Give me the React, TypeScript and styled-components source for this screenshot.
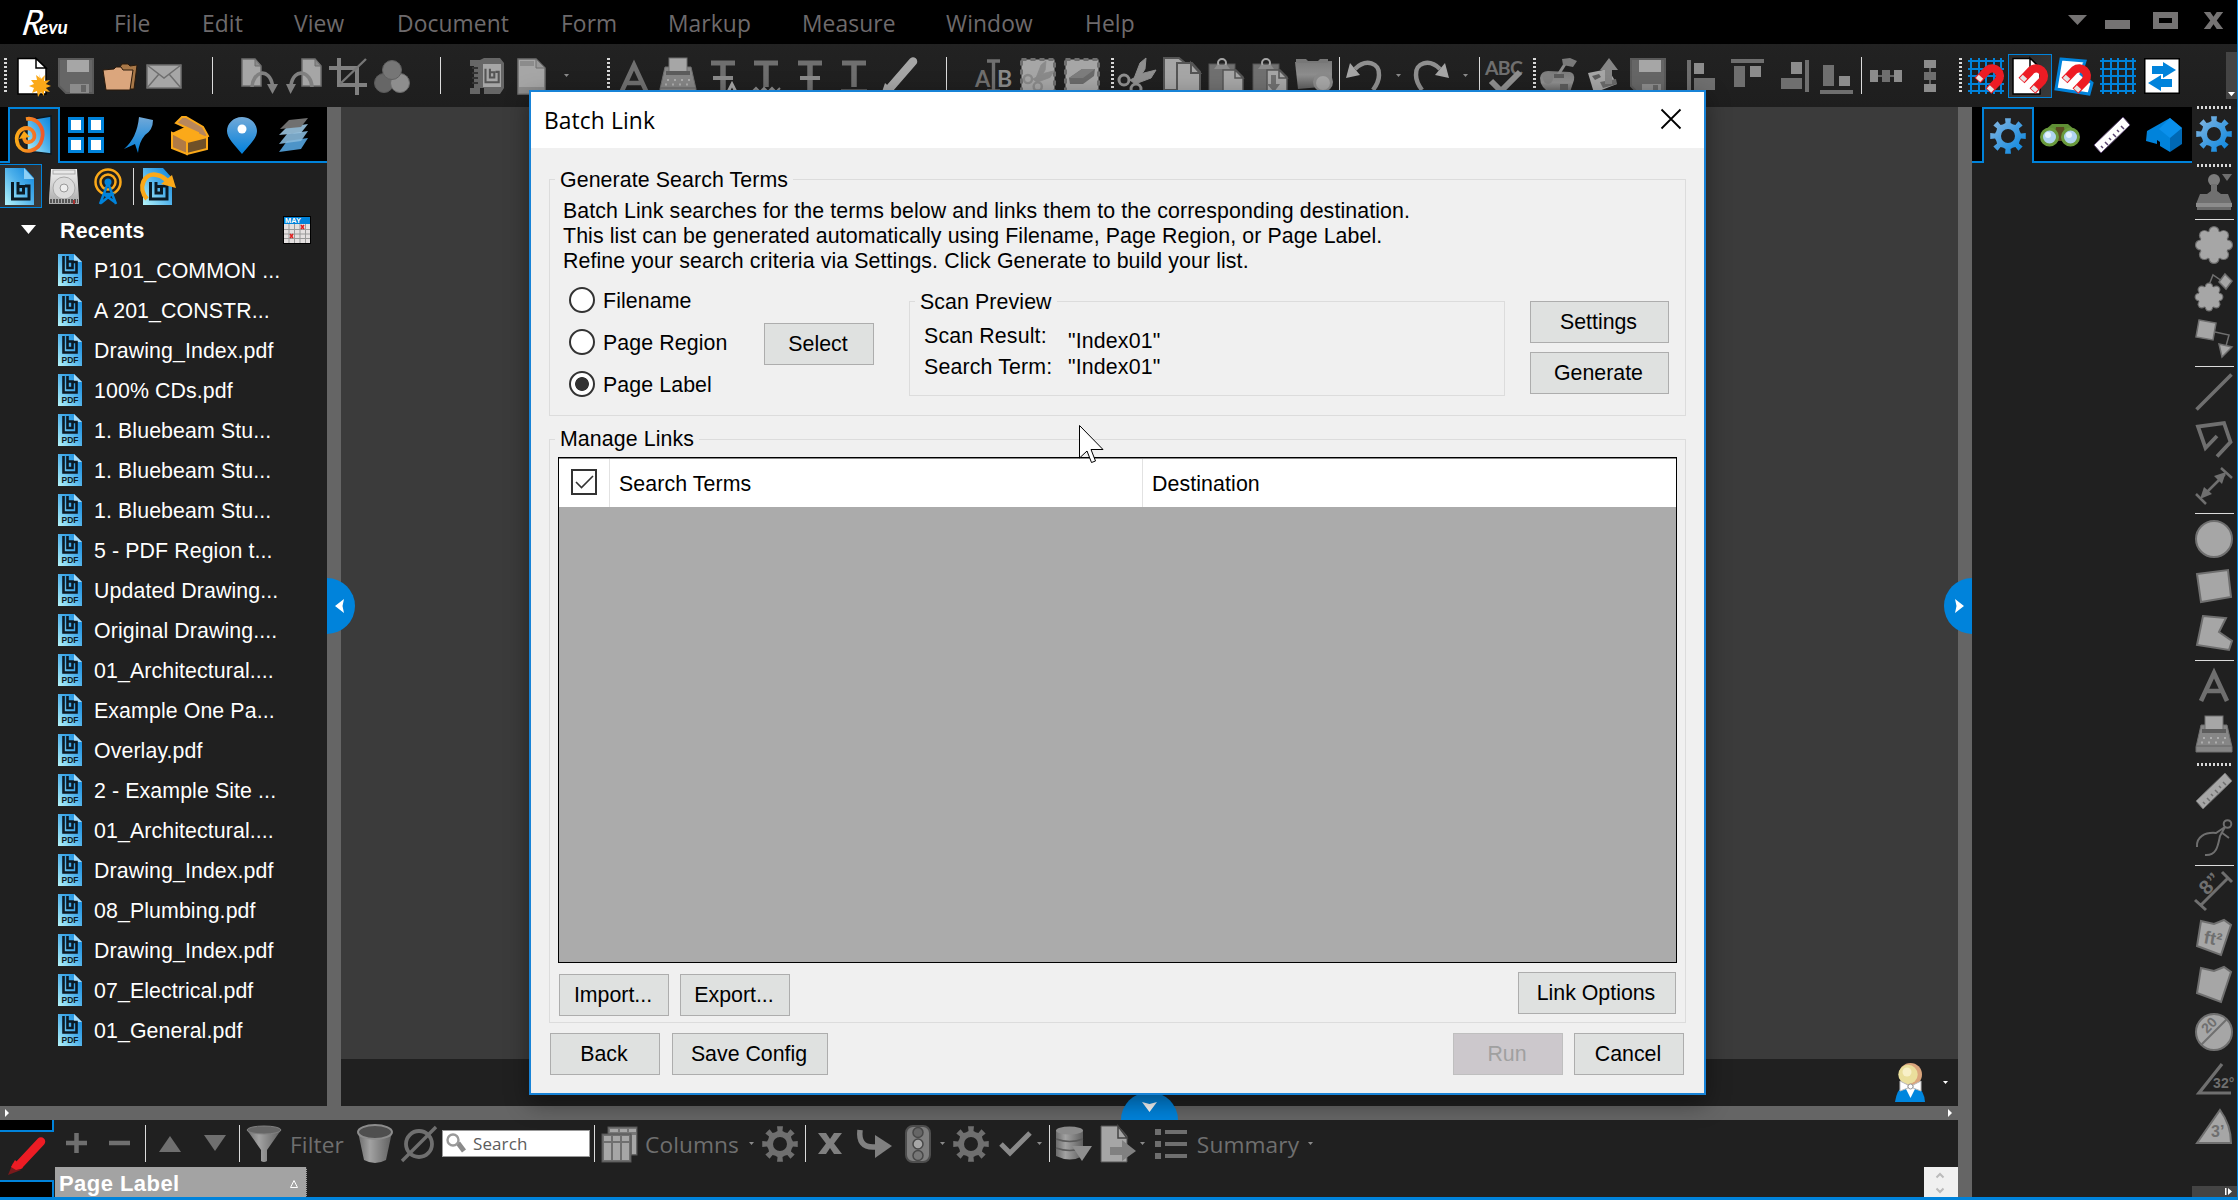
import React from 'react';
import styled, { createGlobalStyle } from 'styled-components';

const BLUE = '#0083db';
const PANEL = '#202020';
const SPLIT = '#656565';
const MID = '#6f6f6f';
const LIGHT = '#a6a6a6';
const SANS = '"Liberation Sans", Arial, sans-serif';
const UI = '"Open Sans", "Noto Sans", sans-serif';

const Global = createGlobalStyle`
  * { box-sizing: border-box; }
  html, body { margin: 0; background: #000; overflow: hidden; }
  svg { display: block; overflow: visible; }
`;

/* ------------------------------------------------------------------ */
/* Frame                                                               */
/* ------------------------------------------------------------------ */

const Frame = styled.div`
  position: relative;
  width: 2238px;
  height: 1200px;
  display: grid;
  grid-template-rows: 44px 63px 1fr;
  border-right: 1px solid ${BLUE};
  border-bottom: 3px solid ${BLUE};
  background: ${PANEL};
  font-family: ${SANS};
  font-size: 21.33px;
  letter-spacing: 0.1px;
  overflow: hidden;
`;

const TitleBar = styled.header`
  display: flex;
  background: #000;
  padding-left: 21px;
`;

const Logo = styled.div`
  width: 93px;
  padding-top: 6px;
`;

const MenuItem = styled.div<{ $w: number }>`
  width: ${(p) => p.$w}px;
  font: 22.8px/31px ${UI};
  padding-top: 8px;
  color: #6e6a6c;
  white-space: nowrap;
`;

const WindowControls = styled.div`
  display: flex;
  align-items: flex-start;
  margin-left: auto;
  padding: 12px 13px 0 0;
`;

const Bar = styled.div<{ $h: number }>`
  display: flex;
  align-items: center;
  height: ${(p) => p.$h}px;
`;

const TopBar = styled(Bar)`
  background: linear-gradient(#222, #1e1e1e);
`;

const Slot = styled.div<{ $lead: number; $w: number; $drop?: number }>`
  flex: none;
  display: flex;
  justify-content: center;
  margin-left: ${(p) => p.$lead}px;
  margin-top: ${(p) => p.$drop ?? 0}px;
  width: ${(p) => p.$w}px;
`;

const Rule = styled.i<{ $h?: number }>`
  width: 1px;
  height: ${(p) => p.$h ?? 37}px;
  background: #dcdcdc;
`;

const Grip = styled.i`
  width: 3px;
  height: 36px;
  background: repeating-linear-gradient(#d8d8d8 0 2px, transparent 2px 4px);
`;

const Pressed = styled.div`
  display: flex;
  align-items: center;
  justify-content: center;
  width: 44px;
  height: 44px;
  flex: none;
  border: 1px solid ${BLUE};
  background: linear-gradient(135deg, #2a2a2a, #3a3a3a);
`;

const Overflow = styled.div`
  width: 11px;
  height: 47px;
  background: #444;
  display: flex;
  align-items: flex-end;
  justify-content: center;
  padding-bottom: 3px;
`;

const Body = styled.div`
  display: flex;
  min-height: 0;
`;

const Work = styled.div`
  width: 1958px;
  display: flex;
  flex-direction: column;
`;

const Upper = styled.div`
  display: flex;
  height: 999px;
`;

const VSplit = styled.div`
  position: relative;
  width: 14px;
  flex: none;
  background: ${SPLIT};
`;

const HSplit = styled.div`
  position: relative;
  display: flex;
  align-items: center;
  justify-content: space-between;
  height: 14px;
  padding: 0 6px 0 5px;
  flex: none;
  background: ${SPLIT};
`;

const Handle = styled.div<{ $side: 'left' | 'right' | 'bottom' }>`
  position: absolute;
  display: flex;
  align-items: center;
  justify-content: center;
  background: ${BLUE};
  ${(p) => p.$side === 'left' && 'left: 0; top: 471px; width: 28px; height: 56px; border-radius: 0 28px 28px 0; padding-right: 3px;'}
  ${(p) => p.$side === 'right' && 'right: 0; top: 471px; width: 28px; height: 56px; border-radius: 28px 0 0 28px; padding-left: 3px;'}
  ${(p) => p.$side === 'bottom' && 'left: 1121px; bottom: 0; width: 57px; height: 28px; border-radius: 28px 28px 0 0; padding-top: 1px;'}
`;

const Canvas = styled.main`
  flex: 1;
  background: #3b3b3b;
  display: flex;
  flex-direction: column;
  justify-content: flex-end;
`;

const StatusStrip = styled.div`
  height: 47px;
  background: ${PANEL};
  display: flex;
  justify-content: flex-end;
  align-items: center;
  padding-right: 10px;
  gap: 17px;
`;

/* ------------------------------------------------------------------ */
/* Side panels                                                         */
/* ------------------------------------------------------------------ */

const LeftPanel = styled.aside`
  width: 327px;
  flex: none;
  background: ${PANEL};
`;

const Tabs = styled.div`
  display: flex;
  height: 56px;
  background: #000;
`;

const TabGap = styled.div<{ $w?: number }>`
  ${(p) => (p.$w ? `width: ${p.$w}px;` : 'flex: 1;')}
  border-bottom: 2px solid ${BLUE};
`;

const Tab = styled.div<{ $active?: boolean; $w: number }>`
  display: flex;
  align-items: center;
  justify-content: center;
  width: ${(p) => p.$w}px;
  ${(p) =>
    p.$active
      ? `background: ${PANEL}; border: 2px solid ${BLUE}; border-bottom: 0;`
      : `border-bottom: 2px solid ${BLUE}; padding-top: 2px;`}
`;

const SourceBar = styled.div`
  display: flex;
  align-items: center;
  height: 46px;
`;

const SourcePressed = styled(Pressed)`
  width: 42px;
  border-left: 0;
  padding-right: 2px;
`;

const SectionHead = styled.div`
  display: flex;
  align-items: center;
  height: 41px;
  padding: 0 16px 0 21px;
  color: #fff;
  font-weight: bold;
  letter-spacing: 0.25px;

  & > span {
    flex: 1;
    margin-left: 24px;
    padding-top: 4px;
  }
`;

const FileRow = styled.div`
  display: flex;
  align-items: center;
  height: 40px;
  padding-left: 58px;
  gap: 12px;
  color: #fff;
  white-space: pre;

  span {
    padding-top: 3px;
  }
`;

const RightPanel = styled.aside`
  width: 220px;
  flex: none;
  background: ${PANEL};
`;

const ToolColumn = styled.div`
  display: flex;
  flex-direction: column;
  flex: 1;
`;

const ToolSlot = styled.div<{ $lead: number; $h: number }>`
  flex: none;
  display: flex;
  align-items: center;
  width: 44px;
  justify-content: center;
  margin-top: ${(p) => p.$lead}px;
  height: ${(p) => p.$h}px;
`;

const HRule = styled.i`
  width: 39px;
  height: 1px;
  background: #dcdcdc;
`;

const HGrip = styled.i`
  width: 36px;
  height: 3px;
  margin-left: 2px;
  background: repeating-linear-gradient(90deg, #d8d8d8 0 2px, transparent 2px 4px);
`;

const ColumnEnd = styled.div`
  width: 45px;
  height: 11px;
  margin-top: auto;
  background: #444;
  display: flex;
  align-items: center;
  justify-content: flex-end;
  padding-right: 5px;
`;

/* ------------------------------------------------------------------ */
/* Markups list panel                                                  */
/* ------------------------------------------------------------------ */

const Bottom = styled.section`
  display: flex;
  height: 77px;
`;

const SideTabs = styled.div`
  width: 54px;
  display: grid;
  grid-template-rows: 12px 48px 17px;
`;

const SideTab = styled.div<{ $edge?: 'top' | 'bottom' }>`
  display: flex;
  align-items: center;
  justify-content: center;
  ${(p) => p.$edge && `background: #000; border-right: 2px solid ${BLUE}; border-${p.$edge}: 2px solid ${BLUE};`}
`;

const BottomMain = styled.div`
  flex: 1;
  display: flex;
  flex-direction: column;
`;

const BarText = styled.span`
  font: 22.7px/30px ${UI};
  color: ${MID};
  white-space: nowrap;
  padding-top: 3px;
`;

const SearchBox = styled.div`
  display: flex;
  align-items: center;
  gap: 6px;
  width: 148px;
  height: 27px;
  padding-left: 3px;
  border: 1px solid #999;
  background: #fff;
  color: #5c5c5c;
  font: 17px/24px ${UI};
`;

const HeaderLine = styled.div`
  display: flex;
  justify-content: space-between;
  height: 30px;
  padding-left: 1px;
`;

const ColumnHead = styled.div`
  display: flex;
  align-items: center;
  justify-content: space-between;
  width: 252px;
  padding: 4px 8px 0 4px;
  background: #a3a3a3;
  border-right: 1px dotted #333;
  color: #fff;
  font-size: 22px;
  font-weight: bold;
  letter-spacing: 0.45px;
`;

const Spinner = styled.div`
  width: 34px;
  background: #f0f0f0;
  display: flex;
  flex-direction: column;
  align-items: center;
  justify-content: space-between;
  padding: 6px 2px 4px 0;
`;

/* ------------------------------------------------------------------ */
/* Dialog                                                              */
/* ------------------------------------------------------------------ */

const Dialog = styled.div`
  position: absolute;
  left: 529px;
  top: 90px;
  width: 1177px;
  height: 1005px;
  border: 2px solid #1883d7;
  background: #f0f0f0;
  box-shadow: 0 8px 22px rgba(0, 0, 0, 0.4);
  color: #000;
  line-height: 24px;
`;

const DialogTitle = styled.div`
  display: flex;
  justify-content: space-between;
  height: 56px;
  padding: 0 23px 0 13px;
  background: #fff;
  font: 22.8px/58px ${UI};

  svg {
    margin-top: 17px;
  }
`;

const DialogBody = styled.div`
  padding: 19px 18px 0;
`;

const Group = styled.fieldset<{ $h: number; $mt?: number }>`
  margin: ${(p) => p.$mt ?? 0}px 0 0;
  padding: 0;
  min-width: 0;
  height: ${(p) => p.$h}px;
  border: 1px solid #dcdcdc;
`;

const Legend = styled.legend<{ $line?: number }>`
  height: 24px;
  line-height: ${(p) => p.$line ?? 25}px;
  margin-left: 5px;
  padding: 0 5px;
`;

const Intro = styled.p`
  margin: 8px 0 0 13px;
  line-height: 25px;
  white-space: nowrap;
`;

const OptionsRow = styled.div`
  display: flex;
  align-items: flex-start;
  padding: 0 0 0 19px;
`;

const Radios = styled.div`
  width: 195px;
  padding-top: 5px;
`;

const RadioRow = styled.label`
  display: flex;
  align-items: center;
  gap: 8px;
  height: 42px;

  span {
    padding-top: 2px;
  }
`;

const RadioDot = styled.i<{ $on?: boolean }>`
  width: 26px;
  height: 26px;
  border-radius: 50%;
  border: 2px solid #333;
  background: ${(p) => (p.$on ? 'radial-gradient(circle, #333 0 6.5px, #fff 7.3px)' : '#fff')};
`;

const Btn = styled.button<{ $w: number; $off?: boolean }>`
  width: ${(p) => p.$w}px;
  height: 42px;
  padding: 0 2px 1px 0;
  border: 1px solid ${(p) => (p.$off ? '#bfbfbf' : '#adadad')};
  background: ${(p) => (p.$off ? '#ccc8cc' : '#dfe1e0')};
  color: ${(p) => (p.$off ? '#a0a0a0' : '#000')};
  font: inherit;
`;

const SelectWrap = styled.div`
  margin-top: 49px;
  width: 145px;
`;

const ScanGroup = styled(Group)`
  width: 596px;
  margin-top: 15px;
`;

const ScanGrid = styled.div`
  display: grid;
  grid-template-columns: 144px 1fr;
  row-gap: 7px;
  padding: 11px 0 0 14px;
  letter-spacing: 0.15px;

  & > b {
    font-weight: normal;
  }
`;

const FirstValue = styled.b`
  padding-top: 5px;
  height: 24px;
`;

const Stack = styled.div`
  display: flex;
  flex-direction: column;
  gap: 9px;
  padding: 27px 0 0 25px;
`;

const Table = styled.div`
  margin: 6px 8px 0;
  height: 506px;
  border: 1px solid #000;
  background: #ababab;
`;

const TableHead = styled.div`
  display: grid;
  grid-template-columns: 50px 533px 1fr;
  height: 49px;
  border-top: 1px solid #888;
  background: #fff;
`;

const HeadCell = styled.div`
  display: flex;
  align-items: center;
  padding: 2px 0 0 9px;
  border-left: 1px solid #e2e2e2;
`;

const CheckCell = styled.div`
  padding: 10px 0 0 12px;
`;

const ButtonRow = styled.div<{ $pad: string }>`
  display: flex;
  align-items: flex-start;
  padding: ${(p) => p.$pad};
`;

const Push = styled.div<{ $w?: number }>`
  ${(p) => (p.$w ? `width: ${p.$w}px;` : 'flex: 1;')}
`;

const Lower = styled.div`
  padding-top: 2px;
  display: flex;
`;

const Pointer = styled.div`
  position: absolute;
  left: 1079px;
  top: 425px;
`;

/* ------------------------------------------------------------------ */
/* Icons                                                               */
/* ------------------------------------------------------------------ */

type IconProps = { children: React.ReactNode; w?: number; h?: number; vb?: string };
const Ic = ({ children, w = 36, h = 36, vb }: IconProps) => (
  <svg width={w} height={h} viewBox={vb ?? `0 0 ${w} ${h}`} fill="none">
    {children}
  </svg>
);

const Defs = () => (
  <svg width="0" height="0" style={{ position: 'absolute' }}>
    <defs>
      <linearGradient id="blue" x1="0" y1="0" x2="1" y2="1">
        <stop offset="0" stopColor="#8ab8e0" />
        <stop offset="1" stopColor="#0083e0" />
      </linearGradient>
      <linearGradient id="blueDown" x1="0" y1="0" x2="0" y2="1">
        <stop offset="0" stopColor="#72a9d8" />
        <stop offset="1" stopColor="#0080dc" />
      </linearGradient>
      <linearGradient id="doc" x1="1" y1="0" x2="0" y2="1">
        <stop offset="0" stopColor="#0a84dc" />
        <stop offset="0.45" stopColor="#4aaeea" />
        <stop offset="1" stopColor="#b4f4fa" />
      </linearGradient>
      <linearGradient id="grey" x1="0" y1="0" x2="0" y2="1">
        <stop offset="0" stopColor="#7a7a7a" />
        <stop offset="0.5" stopColor="#8e8e8e" />
        <stop offset="1" stopColor="#5e5e5e" />
      </linearGradient>
      <linearGradient id="greySide" x1="0" y1="0" x2="1" y2="0">
        <stop offset="0" stopColor="#6b6b6b" />
        <stop offset="0.35" stopColor="#a2a2a2" />
        <stop offset="1" stopColor="#5f5f5f" />
      </linearGradient>
      <linearGradient id="disk" x1="0" y1="0" x2="0" y2="1">
        <stop offset="0" stopColor="#f4f4f4" />
        <stop offset="1" stopColor="#a9a9a9" />
      </linearGradient>
      <linearGradient id="swirl" x1="0" y1="0" x2="1" y2="0">
        <stop offset="0" stopColor="#fba919" />
        <stop offset="1" stopColor="#ef5a2a" />
      </linearGradient>
    </defs>
  </svg>
);

const gearPath = (() => {
  const pts: string[] = [];
  for (let i = 0; i < 8; i++) {
    const a = (i * Math.PI) / 4;
    [
      [-0.42, 12.6],
      [-0.19, 13.2],
      [-0.165, 18],
      [0.165, 18],
      [0.19, 13.2],
      [0.42, 12.6],
    ].forEach(([d, r]) => {
      pts.push(`${(18 + r * Math.sin(a + d)).toFixed(2)} ${(18 - r * Math.cos(a + d)).toFixed(2)}`);
    });
  }
  return `M${pts.join('L')}ZM18 11a7 7 0 1 0 0 14a7 7 0 1 0 0 -14Z`;
})();

const Gear = ({ fill = MID, size = 36 }: { fill?: string; size?: number }) => (
  <Ic w={size} h={size} vb="0 0 36 36">
    <path d={gearPath} fill={fill} fillRule="evenodd" />
  </Ic>
);

const Down = ({ w = 5, fill = '#8a8a8a' }: { w?: number; fill?: string }) => (
  <Ic w={w} h={w * 0.6} vb="0 0 10 6">
    <path d="M0 0H10L5 6Z" fill={fill} />
  </Ic>
);

const PageBody = ({ x = 0 }: { x?: number }) => (
  <g transform={`translate(${x} 0)`}>
    <path d="M1 1H14L20 8V28H1Z" fill={LIGHT} stroke={MID} strokeWidth="1.5" />
    <path d="M14 1V8H20Z" fill="#8a8a8a" stroke={MID} />
  </g>
);

const NewDoc = () => (
  <Ic>
    <path d="M1 0.5H19L29 10V36H1Z" fill="#fff" stroke="#000" strokeWidth="1.5" />
    <path d="M19 0.5V10H29Z" fill="#fff" stroke="#000" strokeWidth="1.5" />
    <path d="M22 16l2 5 4-4-1 6 6-1-4 4 5 2-5 2 4 4-6-1 0 5-3-4-3 5-1-6-5 2 2-5-5-2 5-2-3-4 6 0-1-5 4 3z" fill="#fba919" />
  </Ic>
);
const Save = () => (
  <Ic>
    <path d="M1 1H35V35H8L1 28Z" fill="#666" stroke="#5a5a5a" strokeWidth="2" />
    <rect x="9" y="2" width="22" height="12" fill={LIGHT} />
    <rect x="12" y="26" width="19" height="9" fill="#8c8c8c" />
    <rect x="23" y="27" width="5" height="7" fill="#666" />
  </Ic>
);
const Folder = () => (
  <Ic>
    <path d="M18 9L20 6H26L28 8L35 7L32 31H8Z" fill="#a87848" stroke="#2a1a0c" />
    <path d="M1 12L12 11L14 9H19L21 12L31 12L28 32H4Z" fill="#dba67d" stroke="#2a1a0c" />
  </Ic>
);
const Mail = () => (
  <Ic>
    <rect x="1" y="7" width="34" height="23" fill={LIGHT} stroke={MID} strokeWidth="1.5" />
    <path d="M1 7L18 20L35 7M1 30L13 16M35 30L23 16" stroke={MID} strokeWidth="1.5" />
  </Ic>
);
const RotateR = () => (
  <Ic>
    <PageBody />
    <path d="M11 29C12 13 28 9 31.500 27" stroke="#808080" strokeWidth="3.600" />
    <path d="M26 26H37L31.500 36Z" fill="#808080" />
  </Ic>
);
const RotateL = () => (
  <Ic>
    <PageBody x={15} />
    <path d="M26 29C25 13 8 9 5 27" stroke="#808080" strokeWidth="3.600" />
    <path d="M0 26H10L4.500 36Z" fill="#808080" />
  </Ic>
);
const Crop = () => (
  <Ic w={38}>
    <path d="M10 0V27H38M0 10H28V37" stroke="#808080" strokeWidth="4" />
    <path d="M11 26L37 1" stroke="#777" strokeWidth="2.400" />
  </Ic>
);
const Circles = () => (
  <Ic>
    <circle cx="10" cy="25" r="9.500" fill="#666" stroke="#5a5a5a" />
    <circle cx="26" cy="25" r="9.500" fill="#8e8e8e" stroke="#6a6a6a" />
    <circle cx="18" cy="12" r="9.500" fill="#767676" stroke="#606060" />
  </Ic>
);
const BMark = ({ c = '#0b1a24', s = 3 }: { c?: string; s?: number }) => (
  <path d="M7.500 14V31H24V18H20M13 14V25H18.500V18.500H13" stroke={c} strokeWidth={s} fill="none" />
);
const Clamp = () => (
  <Ic>
    <path d="M0 2H10L14 0H30L34 5V30L30 36H14V30H10V36H0V30H4V8H0Z" fill="#666" />
    <path d="M2 10H8M2 15H8M2 20H8M2 25H8" stroke="#333" strokeWidth="2" />
    <rect x="13" y="6" width="18" height="23" fill={LIGHT} />
    <g transform="translate(9.500 -0.500) scale(0.8)">
      <BMark c="#555" s={2.6} />
    </g>
  </Ic>
);
const Sheet = () => (
  <Ic w={30}>
    <path d="M1 1H19L28 10V36H1Z" fill={LIGHT} stroke={MID} strokeWidth="1.500" />
    <path d="M3 3H17V8H3Z" fill="#8c8c8c" />
    <path d="M19 1V10H28Z" fill="#999" stroke={MID} />
    <path d="M2 29H27V35H2Z" fill="#8c8c8c" />
  </Ic>
);
const LetterA = ({ s = 30 }: { s?: number }) => (
  <Ic w={s} h={s} vb="0 0 30 30">
    <path d="M2 30L15 2L28 30M7 20H23" stroke={MID} strokeWidth="4.600" />
  </Ic>
);
const Typewriter = () => (
  <Ic w={38} h={38}>
    <path d="M6 10H32L37 32V37H1V32Z" fill="#868686" stroke={MID} />
    <rect x="10" y="1" width="18" height="14" fill={LIGHT} stroke={MID} />
    <path d="M7 14H31V18H7Z" fill="#5c5c5c" />
    <path d="M8 23H32M6 27.500H33" stroke="#adadad" strokeWidth="2" strokeDasharray="2 5" />
    <path d="M1 31H37" stroke={MID} strokeWidth="1.500" />
  </Ic>
);
const TBar = ({ strike, squiggle, under, caret }: { strike?: boolean; squiggle?: boolean; under?: boolean; caret?: boolean }) => (
  <Ic w={28} vb="0 0 28 36">
    <path d="M2 5H26" stroke={MID} strokeWidth="5" />
    <path d={`M14 5V${strike ? 33 : 29}`} stroke={MID} strokeWidth="5.500" />
    {strike && <path d="M4 20H24" stroke="#8a8a8a" strokeWidth="4" />}
    {caret && <path d="M18 36L23 26L28 36" stroke={LIGHT} strokeWidth="3" />}
    {squiggle && <path d="M0 34L4 30L8 34L12 30L16 34L20 30L24 34L28 30" stroke="#8a8a8a" strokeWidth="2" />}
    {under && <path d="M1 33H27" stroke="#8a8a8a" strokeWidth="3" />}
  </Ic>
);
const Highlighter = () => (
  <Ic>
    <path d="M32 3.500L9 30" stroke={LIGHT} strokeWidth="8.500" strokeLinecap="round" />
    <path d="M4 25L13 33L0 37Z" fill={LIGHT} />
  </Ic>
);
const EditText = () => (
  <Ic>
    <text x="-1" y="29" fontFamily="Lato" fontWeight="bold" fontSize="22" fill={MID}>A</text>
    <text x="21" y="29" fontFamily="Lato" fontWeight="bold" fontSize="23" fill="#8a8a8a">B</text>
    <path d="M11 3H24M17.500 3V34M11 33H24" stroke={MID} strokeWidth="3.400" />
  </Ic>
);
const ScissorShape = ({ c = LIGHT }: { c?: string }) => (
  <g stroke={c} fill="none">
    <path d="M15 23L22 5L28 0L27 11L19 24Z" fill={c} />
    <path d="M12 22L26 15L38 12L33 20L17 26Z" fill={c} />
    <circle cx="6" cy="22" r="5" strokeWidth="3" />
    <circle cx="18" cy="31" r="5" strokeWidth="3" />
  </g>
);
const CutRegion = () => (
  <Ic>
    <rect x="1.500" y="1.500" width="33" height="33" fill={LIGHT} stroke={MID} strokeWidth="3" strokeDasharray="5 4" />
    <g transform="translate(3 3) scale(0.82)">
      <ScissorShape c="#8a8a8a" />
    </g>
  </Ic>
);
const EraseRegion = () => (
  <Ic>
    <rect x="1.500" y="1.500" width="33" height="33" fill={LIGHT} stroke={MID} strokeWidth="3" strokeDasharray="5 4" />
    <path d="M5 20L18 11H31L30 18L19 26H6Z" fill="#6a6a6a" />
    <path d="M5 20L18 11H31L19 20Z" fill="#7d7d7d" />
  </Ic>
);
const Cut = () => (
  <Ic w={39}>
    <ScissorShape c="#8f8f8f" />
  </Ic>
);
const Copy = () => (
  <Ic w={38}>
    <path d="M1 0H16L22 5V32H1Z" fill={LIGHT} stroke="#555" strokeWidth="2" />
    <path d="M14 5H29L37 14V38H14Z" fill={LIGHT} stroke="#555" strokeWidth="2" />
    <path d="M28 5V15H37Z" fill={LIGHT} stroke="#555" strokeWidth="2" />
  </Ic>
);
const Paste = ({ arrow }: { arrow?: boolean }) => (
  <Ic>
    <rect x="1" y="6" width="26" height="30" fill="#707070" stroke="#555" />
    <circle cx="14" cy="5" r="4" stroke={LIGHT} strokeWidth="2" />
    <path d="M6 11L9 7H19L22 11Z" fill="#8a8a8a" />
    <path d="M15 12H28L35 19V37H15Z" fill={LIGHT} stroke="#555" strokeWidth="1.500" />
    <path d="M27 12V20H35Z" fill={LIGHT} stroke="#555" strokeWidth="1.500" />
    {arrow && <path d="M19 17H24V26H28L22 34L15 26H19Z" fill="#707070" />}
  </Ic>
);
const Camera = () => (
  <Ic w={40}>
    <path d="M1 4L38 3L38 28L4 31Z" fill="url(#grey)" />
    <path d="M2 5V1H12L14 3H24L26 1H34V5Z" fill="#777" />
    <circle cx="29" cy="24" r="10" fill="#8a8a8a" />
    <circle cx="29" cy="25" r="7" fill={LIGHT} />
  </Ic>
);
const Undo = ({ flip }: { flip?: boolean }) => (
  <Ic>
    <g transform={flip ? 'translate(36 0) scale(-1 1)' : undefined}>
      <path d="M9 11C20 0 34 5 33 17C33 23 30 28 27 32" stroke="#8f8f8f" strokeWidth="4.500" />
      <path d="M4 5L14 17L0 20Z" fill={LIGHT} />
    </g>
  </Ic>
);
const Spell = () => (
  <Ic w={37}>
    <text x="-1" y="16.500" fontFamily="Lato" fontWeight="bold" fontSize="19.500" textLength="38" fill={MID}>ABC</text>
    <path d="M5 23L15 33L34 14" stroke="#8f8f8f" strokeWidth="6" />
  </Ic>
);
const Mailbox = () => (
  <Ic w={38}>
    <path d="M0 20Q1 13 8 13L30 14Q35 15 34 22L30 34L12 36Q0 30 0 20Z" fill="url(#grey)" />
    <path d="M18 17L27 3" stroke="#8a8a8a" strokeWidth="3" />
    <path d="M22 1L30 0L37 3L33 9L23 7Z" fill="#7a7a7a" />
    <ellipse cx="8" cy="20" rx="5" ry="6" fill="#808080" />
    <path d="M14 16H24V20H14ZM20 26H28V32H20Z" fill="#5c5c5c" />
  </Ic>
);
const ExportUp = () => (
  <Ic w={32}>
    <path d="M0 15L20 11L29 26L6 35Z" fill={LIGHT} />
    <path d="M4 18L11 16L13 19L7 22Z" fill="#5c5c5c" />
    <path d="M12 24L28 21L29 26L15 30Z" fill="#6a6a6a" />
    <path d="M21 0L30 12H24V26H17V12H12Z" fill="#858585" />
  </Ic>
);
const AlignIcon = ({ v }: { v: 'l' | 't' | 'r' | 'b' }) => {
  if (v === 'l')
    return (
      <Ic w={29}>
        <path d="M0 2H4V34H0Z" fill={MID} />
        <path d="M7 5H17V16H7Z" fill="#8c8c8c" />
        <path d="M7 20H28V32H7Z" fill={MID} />
      </Ic>
    );
  if (v === 't')
    return (
      <Ic w={33}>
        <path d="M0 1H33V5H0Z" fill={MID} />
        <path d="M3 8H14V29H3Z" fill={MID} />
        <path d="M19 8H30V19H19Z" fill="#8c8c8c" />
      </Ic>
    );
  if (v === 'r')
    return (
      <Ic w={29}>
        <path d="M25 2H29V34H25Z" fill={MID} />
        <path d="M11 4H22V16H11Z" fill="#8c8c8c" />
        <path d="M1 20H22V31H1Z" fill={MID} />
      </Ic>
    );
  return (
    <Ic w={33}>
      <path d="M0 32H33V36H0Z" fill={MID} />
      <path d="M3 7H14V28H3Z" fill={MID} />
      <path d="M19 18H30V28H19Z" fill="#8c8c8c" />
    </Ic>
  );
};
const DistH = () => (
  <Ic w={32}>
    <path d="M6 18H26" stroke={LIGHT} />
    <path d="M0 12H8V24H0ZM24 12H32V24H24Z" fill="#8c8c8c" />
    <path d="M12 12H20V24H12Z" fill={MID} />
  </Ic>
);
const DistV = () => (
  <Ic w={12}>
    <path d="M6 5V30" stroke={LIGHT} />
    <path d="M0 2H12V10H0ZM0 26H12V34H0Z" fill="#8c8c8c" />
    <path d="M0 14H12V22H0Z" fill={MID} />
  </Ic>
);
const GridLines = () => (
  <path d="M3 0V36M11 0V36M18 0V36M26 0V36M33 0V36M0 3H36M0 11H36M0 18H36M0 26H36M0 33H36" stroke={BLUE} strokeWidth="2" />
);
const Magnet = () => (
  <g>
    <path d="M9.500 22.500L19.500 12A7.700 7.700 0 0 1 30.500 22.500L20.500 33" stroke="#ed1c24" strokeWidth="8.300" />
    <path d="M10 22L13 18.800M21 32.500L24 29.300" stroke="#e4e4e4" strokeWidth="6" />
  </g>
);
const GridSnap = () => (
  <Ic>
    <GridLines />
    <Magnet />
  </Ic>
);
const PageSnap = () => (
  <Ic>
    <path d="M1 0.500H18L28 10V36H1Z" fill="#fff" stroke="#000" strokeWidth="1.500" />
    <path d="M18 0V10H28Z" fill="#fff" stroke="#000" strokeWidth="1.500" />
    <Magnet />
  </Ic>
);
const ShapeSnap = () => (
  <Ic w={38}>
    <path d="M6 1L30 3L26 16L37 25L34 36L1 31Z" fill="#fff" stroke={BLUE} strokeWidth="3" />
    <Magnet />
  </Ic>
);
const Swap = () => (
  <Ic>
    <rect x="0.750" y="0.750" width="34.500" height="34.500" fill="#fff" stroke="#000" strokeWidth="1.500" />
    <path d="M8 8H19V4L32 12L19 20V16H8ZM28 21H17V17L4 25L17 33V29H28Z" fill={BLUE} />
  </Ic>
);

const Swirl = () => (
  <Ic w={38} h={40}>
    <path d="M12 4L36 0V38L12 35Z" fill="url(#doc)" stroke="#0b1a24" strokeWidth="1.500" />
    <path d="M11 3C22 1 30 12 27 23C24 36 8 39 3 29C-1 19 5 12 12 12C21 13 22 25 14 26C11 27 9 25 9 21" stroke="url(#swirl)" strokeWidth="3.800" />
    <path d="M4 23L9 15L15 21Z" fill="#fba919" />
  </Ic>
);
const Thumbs = () => (
  <Ic>
    {[1.5, 21.5].map((x) => [1.5, 21.5].map((y) => (
      <rect key={`${x}${y}`} x={x} y={y} width="13" height="13" fill="#fff" stroke={BLUE} strokeWidth="3" />
    )))}
  </Ic>
);
const Ribbon = () => (
  <Ic w={31} h={38}>
    <path d="M16 1L30 4Q30 14 22 19Q16 26 15 37L12 28L1 33Q14 22 16 1Z" fill="url(#blueDown)" />
  </Ic>
);
const Chest = () => (
  <Ic w={38} h={40}>
    <path d="M5 8L11 2H15L32 12L37 21L27 26L27 18Z" fill="#b8875c" stroke="#fba919" strokeWidth="2" />
    <path d="M1 18L16 26V39L1 33Z" fill="#b07a45" stroke="#fba919" strokeWidth="2" />
    <path d="M16 27L36 22V34L16 39Z" fill="#6f5028" stroke="#fba919" strokeWidth="2" />
    <path d="M1 18L14 12L36 22L16 27Z" fill="#fba919" />
  </Ic>
);
const Pin = () => (
  <Ic w={30} h={37}>
    <path d="M15 0C24 0 30 7 30 14C30 21 23 27 15 37C7 27 0 21 0 14C0 7 6 0 15 0Z" fill="url(#blueDown)" />
    <circle cx="15" cy="12" r="4.500" fill="#fff" />
  </Ic>
);
const Layers = () => (
  <Ic w={30} h={34}>
    <path d="M8 23L29 20L22 31L0 34Z" fill="#4d94c8" />
    <path d="M8 16L29 13L22 23L0 26Z" fill="#86b8da" opacity="0.9" />
    <path d="M8 9L29 6L22 15L0 17Z" fill="#9ac4e0" opacity="0.9" />
    <path d="M10 2L29 0L22 9L1 11Z" fill="#707070" />
  </Ic>
);
const DocB = () => (
  <Ic w={30} h={37}>
    <path d="M0 0H20L29 10V37H0Z" fill="url(#doc)" />
    <path d="M19 0V11H29Z" fill="#8cd0f6" />
    <BMark />
  </Ic>
);
const HardDisk = () => (
  <Ic w={32} h={37}>
    <path d="M3 1H29L31 31V36H1V31Z" fill="url(#disk)" />
    <rect x="5" y="2" width="22" height="4" fill="#e8e8e8" stroke="#aaa" />
    <circle cx="16" cy="20" r="11" fill="#dcdcdc" stroke="#aaa" />
    <circle cx="16" cy="20" r="4" fill="#eee" stroke="#999" />
    <path d="M2 33H30" stroke="#555" strokeWidth="4" strokeDasharray="2 1" />
    <path d="M26 32V36" stroke="#a33" strokeWidth="2" />
  </Ic>
);
const Antenna = () => (
  <Ic w={28} h={37}>
    <circle cx="14" cy="14" r="12.500" stroke="#fba919" strokeWidth="2.500" />
    <circle cx="14" cy="14" r="7.500" stroke="#fba919" strokeWidth="2.500" />
    <circle cx="14" cy="14" r="3.500" fill={BLUE} />
    <path d="M14 15L6 36M14 15L22 36M10 26H18L7 35M11 27L22 35" stroke={BLUE} strokeWidth="2.500" />
  </Ic>
);
const DocOpen = () => (
  <Ic w={35} h={37}>
    <g transform="translate(2 0)">
      <path d="M0 0H20L29 10V37H0Z" fill="url(#doc)" />
      <BMark />
    </g>
    <path d="M6 31C-4 20 3 4 16 7C21 8 24 10 27 14" stroke="#fba919" strokeWidth="4.500" />
    <path d="M31 7L35 20L20 16Z" fill="#fba919" />
  </Ic>
);
const Calendar = () => (
  <Ic w={28} h={28}>
    <rect x="0.500" y="0.500" width="27" height="27" fill="#e4e0e0" stroke="#000" />
    <rect x="1" y="1" width="26" height="7" fill={BLUE} />
    <text x="2" y="7" fontFamily="Liberation Sans" fontWeight="bold" fontSize="7.500" letterSpacing="0" fill="#fff">MAY</text>
    <path d="M6 8V27M11.500 8V27M17 8V27M22.500 8V27M1 13.500H27M1 18H27M1 22.500H27" stroke="#9a9a9a" />
    <path d="M18 9L21 13M21 9L18 13M7 18L10 22M10 18L7 22" stroke="#e02020" strokeWidth="1.500" />
  </Ic>
);
const PdfIcon = () => (
  <Ic w={24} h={32}>
    <path d="M0 0H16L24 8V32H0Z" fill="url(#doc)" />
    <path d="M16 0V8H24Z" fill="#a8dcf8" />
    <path d="M5.500 2V18.500H18.500V8H15M9.500 2V14H14.500V7.500H9.500" stroke="#0b1a24" strokeWidth="2.600" />
    <text x="12" y="28.500" textAnchor="middle" fontFamily="Liberation Sans" fontWeight="bold" fontSize="8.500" letterSpacing="0" fill="#0b1a24">PDF</text>
  </Ic>
);
const Binoculars = () => (
  <Ic w={40} h={24}>
    <path d="M12 1H28L36 8L30 16H10L4 8Z" fill="#5f8f35" />
    <path d="M16 4H24L26 18H14Z" fill="#5a4a20" />
    <circle cx="9.500" cy="14" r="8" fill="#b0d4f0" stroke="#6a9a3c" strokeWidth="3" />
    <circle cx="30.500" cy="14" r="8" fill="#b0d4f0" stroke="#6a9a3c" strokeWidth="3" />
    <circle cx="8" cy="12" r="3" fill="#e4f2fc" />
    <circle cx="29" cy="12" r="3" fill="#e4f2fc" />
  </Ic>
);
const Ruler = ({ fill = '#fff', tick = '#5a4570' }: { fill?: string; tick?: string }) => (
  <Ic w={38} h={38}>
    <path d="M30 1L37 9L8 37L1 29Z" fill={fill} stroke={tick} />
    <path d="M8 30L10 32M12 26L15 29M16 22L18 24M20 18L23 21M24 14L26 16M28 10L31 13" stroke={tick} strokeWidth="1.500" />
  </Ic>
);
const House = () => (
  <Ic w={38} h={34}>
    <path d="M2 13L25 0L25 34L15 28V24L12 22V26L1 23Z" fill={BLUE} />
    <path d="M25 0L37 10V26L25 34Z" fill="#0068b4" />
    <path d="M25 0L37 10L25 20L14 11Z" fill="#0a90ec" />
  </Ic>
);
const Stamp = () => (
  <Ic w={38} h={36}>
    <circle cx="19" cy="6" r="6" fill="#7c7c7c" />
    <path d="M16 10H22V17L26 20H33L37 30H1L5 20H12L16 17Z" fill="#707070" />
    <path d="M1 29H37V33H1Z" fill="#8c8c8c" />
    <path d="M2 33H36V36H2Z" fill="#6a6a6a" />
    <path d="M27 0H37L32 7Z" fill={MID} />
  </Ic>
);
const Blob = ({ cx, cy, r }: { cx: number; cy: number; r: number }) => {
  const lobes = Array.from({ length: 8 }, (_, i) => {
    const a = (i * Math.PI) / 4;
    return [cx + r * 0.73 * Math.cos(a), cy + r * 0.73 * Math.sin(a)];
  });
  return (
    <g>
      {lobes.map(([x, y], i) => (
        <circle key={i} cx={x} cy={y} r={r * 0.3} fill={MID} />
      ))}
      <circle cx={cx} cy={cy} r={r * 0.78} fill={MID} />
      {lobes.map(([x, y], i) => (
        <circle key={i} cx={x} cy={y} r={r * 0.3 - 1.2} fill={LIGHT} />
      ))}
      <circle cx={cx} cy={cy} r={r * 0.76} fill={LIGHT} />
    </g>
  );
};
const Cloud = () => (
  <Ic w={38} h={38}>
    <Blob cx={19} cy={19} r={18.5} />
  </Ic>
);
const CloudPlus = () => (
  <Ic w={38} h={38}>
    <path d="M14 12L18 2L27 8" stroke={MID} strokeWidth="1.500" />
    <path d="M30 1L37 8L31 16L24 9Z" fill={LIGHT} stroke={MID} strokeWidth="1.500" />
    <Blob cx={14} cy={24} r={14} />
  </Ic>
);
const Callout = () => (
  <Ic w={38} h={38}>
    <path d="M20 13L34 16L31 27" stroke={MID} strokeWidth="1.500" />
    <path d="M4 1L21 4L18 21L1 18Z" fill={LIGHT} stroke={MID} strokeWidth="1.500" />
    <path d="M24 25L37 28L27 38Z" fill={LIGHT} stroke={MID} strokeWidth="1.500" />
  </Ic>
);
const LineIcon = () => (
  <Ic w={38} h={38}>
    <path d="M1.500 36.500L36.500 1.500" stroke={MID} strokeWidth="3.500" />
  </Ic>
);
const Polyline = () => (
  <Ic w={38} h={38}>
    <path d="M22 16L10.500 28L3 6.500L29 3L35.500 22L22 36.500" stroke={MID} strokeWidth="3.800" />
  </Ic>
);
const Dimension = () => (
  <Ic w={38} h={38}>
    <path d="M26 1L37 11M1 27L11 37M8 29L30 7" stroke={MID} strokeWidth="2.500" />
    <path d="M31 5L27 17L19 9ZM5 32L9 20L17 27Z" fill={MID} />
  </Ic>
);
const Ellipse = () => (
  <Ic w={38} h={38}>
    <circle cx="19" cy="19" r="18" fill={LIGHT} stroke={MID} strokeWidth="2" />
  </Ic>
);
const Shape = ({ d, children, h = 38 }: { d: string; children?: React.ReactNode; h?: number }) => (
  <Ic w={38} h={h}>
    <path d={d} fill={LIGHT} stroke={MID} strokeWidth="2" />
    {children}
  </Ic>
);
const POLY = 'M6 2L19 5L29 1L36 6L26 36L2 27Z';
const Label = ({ x, y, s, r = 0, t }: { x: number; y: number; s: number; r?: number; t: string }) => (
  <text x={x} y={y} fontFamily="Liberation Sans" fontWeight="bold" fontSize={s} fill={MID} transform={`rotate(${r} ${x} ${y})`}>
    {t}
  </text>
);
const Caliper = () => (
  <Ic w={38} h={38}>
    <circle cx="32.500" cy="5" r="3.800" stroke={MID} strokeWidth="2" />
    <path d="M30 8L21 14C10 13 1 18 2 28M30 8L25 17C23 26 22 37 10 36M26 13L34 19" stroke={MID} strokeWidth="2" />
  </Ic>
);
const Length = () => (
  <Ic w={38} h={38}>
    <path d="M27 0L37 10M0 28L11 38M6 33L32 7" stroke={MID} strokeWidth="3" />
    <Label x={12} y={24} s={20} r={-45} t="8”" />
  </Ic>
);

const Person = () => (
  <Ic w={31} h={40}>
    <path d="M0 39Q2 26 8 24H22Q29 27 30 39Z" fill="#0086de" />
    <path d="M10 24L15.500 35L21 24Z" fill="#fff" />
    <circle cx="15.500" cy="11.500" r="11.500" fill="#dba67d" />
    <circle cx="13" cy="11.500" r="9.700" fill="#eadf9c" />
    <circle cx="12" cy="9" r="4.500" fill="#f8f0c8" />
    <path d="M5 18L13 22V25L5 28ZM26 18L18 22V25L26 28Z" fill="#fff" stroke="#bbb" />
    <circle cx="15.500" cy="23.500" r="2.500" fill="#fff" stroke="#999" />
  </Ic>
);
const RedPen = () => (
  <Ic w={38} h={38}>
    <path d="M33 4.500L11 28" stroke="#ed1c24" strokeWidth="8.500" strokeLinecap="round" />
    <path d="M5 26L13 33L0 38Z" fill="#7a1a1c" />
    <path d="M7 23L15 31L8 33L3 30Z" fill="#ed1c24" />
  </Ic>
);
const Plus = ({ minus }: { minus?: boolean }) => (
  <Ic w={21} h={20}>
    <path d={minus ? 'M0 10H21' : 'M0 10H21M10.500 0V20'} stroke={MID} strokeWidth="4.500" />
  </Ic>
);
const Tri = ({ up }: { up?: boolean }) => (
  <Ic w={22} h={16}>
    <path d={up ? 'M0 16H22L11 0Z' : 'M0 0H22L11 16Z'} fill={MID} />
  </Ic>
);
const Funnel = () => (
  <Ic w={34} h={36}>
    <path d="M0 4L14 24V35Q17 37 20 35V24L34 4Z" fill="url(#greySide)" />
    <ellipse cx="17" cy="4" rx="17" ry="4" fill="#666" stroke="#808080" />
  </Ic>
);
const Trash = () => (
  <Ic w={36} h={40}>
    <path d="M1 8L7 36Q18 42 29 36L35 8Z" fill="url(#greySide)" />
    <ellipse cx="18" cy="8" rx="17" ry="7" fill="#4e4e4e" stroke="#8c8c8c" strokeWidth="2" />
  </Ic>
);
const Null = () => (
  <Ic w={36} h={36}>
    <circle cx="18" cy="18" r="13" stroke={MID} strokeWidth="3.800" />
    <path d="M1 35L35 1" stroke={MID} strokeWidth="3.400" />
  </Ic>
);
const Lens = () => (
  <Ic w={21} h={21}>
    <path d="M12 10L18 18" stroke="#8a8a8a" strokeWidth="5" />
    <circle cx="7" cy="7" r="5.500" fill="#fff" stroke="#9a9a9a" strokeWidth="2.400" />
  </Ic>
);
const ColumnsIcon = () => (
  <Ic w={37} h={36}>
    <rect x="7" y="1" width="29" height="28" fill="#777" stroke="#555" />
    <path d="M9 3H17V6H9ZM19 3H26V6H19ZM28 3H35V6H28ZM31 9H35V28H31Z" fill={LIGHT} />
    <rect x="1" y="8" width="29" height="28" fill={MID} stroke="#555" />
    <path d="M3 10H10V15H3ZM12 10H19V15H12ZM21 10H28V15H21ZM3 17H10V34H3ZM12 17H19V34H12ZM21 17H28V34H21Z" fill={LIGHT} />
  </Ic>
);
const XMark = ({ c = '#808080', w = 24, h = 21 }: { c?: string; w?: number; h?: number }) => (
  <Ic w={w} h={h} vb="0 0 24 21">
    <path d="M0 0H8L12 6L16 0H24L16 10.500L24 21H16L12 15L8 21H0L8 10.500Z" fill={c} />
  </Ic>
);
const Reply = () => (
  <Ic w={35} h={28}>
    <path d="M3 0Q1 17 16 17H20" stroke="#808080" strokeWidth="5.500" />
    <path d="M18 5L35 16L18 28Z" fill="#808080" />
  </Ic>
);
const Traffic = () => (
  <Ic w={26} h={38}>
    <rect x="1" y="1" width="24" height="36" rx="7" fill="#7e7e7e" stroke="#4e4e4e" strokeWidth="2" />
    <g stroke="#484848" strokeWidth="1.500">
      <circle cx="13" cy="7.500" r="5" fill="#666" />
      <circle cx="13" cy="19" r="5" fill={LIGHT} />
      <circle cx="13" cy="30.500" r="5" fill="#777" />
    </g>
  </Ic>
);
const Check = () => (
  <Ic w={33} h={26}>
    <path d="M2 13L11 22L31 2" stroke="#8a8a8a" strokeWidth="5" />
  </Ic>
);
const Database = () => (
  <Ic w={36} h={36}>
    <path d="M0 4V30Q14 37 27 30V4Z" fill="url(#greySide)" />
    <ellipse cx="13.500" cy="4.500" rx="13.500" ry="4" fill="#8c8c8c" />
    <path d="M0 13Q14 18 27 13M0 22Q14 27 27 22" stroke="#5a5a5a" strokeWidth="1.500" />
    <path d="M16 20H36L26 35Z" fill="#8f8f8f" />
  </Ic>
);
const DocExport = () => (
  <Ic w={36} h={36}>
    <path d="M1 0H18L27 10V36H1Z" fill={LIGHT} stroke="#555" />
    <path d="M18 0V12H27Z" fill={LIGHT} stroke="#444" strokeWidth="1.500" />
    <path d="M10 21H22V14L36 25L22 35V29H10Z" fill="#808080" />
  </Ic>
);
const ListIcon = () => (
  <Ic w={32} h={30}>
    <path d="M0 0H6V6H0ZM0 12H6V18H0ZM0 24H6V30H0Z" fill={MID} />
    <path d="M10 1H32V5H10ZM10 13H32V17H10ZM10 25H32V29H10Z" fill={MID} />
  </Ic>
);

/* ------------------------------------------------------------------ */
/* Toolbar contents: [left edge, width, content, downward nudge]       */
/* ------------------------------------------------------------------ */

type Item = [number, number, React.ReactNode, number?];

const topItems: Item[] = [
  [4, 3, <Grip />],
  [17, 36, <NewDoc />],
  [58, 36, <Save />],
  [102, 36, <Folder />],
  [146, 36, <Mail />],
  [212, 1, <Rule />],
  [241, 36, <RotateR />],
  [286, 36, <RotateL />],
  [329, 38, <Crop />],
  [374, 36, <Circles />],
  [440, 1, <Rule />],
  [470, 36, <Clamp />],
  [517, 30, <Sheet />],
  [564, 5, <Down />],
  [607, 3, <Grip />],
  [619, 30, <LetterA />, 4],
  [659, 38, <Typewriter />],
  [709, 28, <TBar strike caret />],
  [752, 28, <TBar squiggle />],
  [796, 28, <TBar strike />],
  [840, 28, <TBar under />],
  [881, 36, <Highlighter />],
  [946, 1, <Rule />],
  [976, 36, <EditText />],
  [1020, 36, <CutRegion />],
  [1064, 36, <EraseRegion />],
  [1111, 3, <Grip />],
  [1118, 39, <Cut />],
  [1163, 38, <Copy />],
  [1208, 36, <Paste />],
  [1252, 36, <Paste arrow />],
  [1294, 40, <Camera />],
  [1339, 1, <Rule />],
  [1346, 36, <Undo />],
  [1396, 5, <Down />],
  [1413, 36, <Undo flip />],
  [1463, 5, <Down />],
  [1479, 1, <Rule />],
  [1486, 37, <Spell />],
  [1533, 3, <Grip />],
  [1540, 38, <Mailbox />],
  [1588, 32, <ExportUp />],
  [1630, 36, <Save />],
  [1687, 29, <AlignIcon v="l" />],
  [1731, 33, <AlignIcon v="t" />],
  [1780, 29, <AlignIcon v="r" />],
  [1820, 33, <AlignIcon v="b" />],
  [1861, 1, <Rule />],
  [1870, 32, <DistH />],
  [1924, 12, <DistV />],
  [1959, 3, <Grip />],
  [1968, 36, <GridSnap />],
  [2008, 44, <Pressed><PageSnap /></Pressed>],
  [2055, 38, <ShapeSnap />],
  [2100, 36, <Ic><GridLines /></Ic>],
  [2144, 36, <Swap />],
  [2226, 11, <Overflow><Down w={7} fill="#fff" /></Overflow>],
];

const bottomItems: Item[] = [
  [66, 21, <Plus />, -1],
  [109, 21, <Plus minus />, -1],
  [145, 1, <Rule />],
  [159, 22, <Tri up />],
  [204, 22, <Tri />, -1],
  [239, 1, <Rule />],
  [247, 34, <Funnel />],
  [290, 54, <BarText>Filter</BarText>],
  [357, 36, <Trash />],
  [401, 36, <Null />],
  [442, 148, <SearchBox><Lens />Search</SearchBox>],
  [594, 1, <Rule />],
  [601, 37, <ColumnsIcon />],
  [645, 94, <BarText>Columns</BarText>],
  [749, 5, <Down />],
  [762, 36, <Gear />],
  [805, 1, <Rule />],
  [818, 24, <XMark />],
  [857, 35, <Reply />],
  [905, 26, <Traffic />],
  [940, 5, <Down />],
  [953, 36, <Gear />],
  [999, 33, <Check />],
  [1037, 5, <Down />],
  [1049, 1, <Rule />],
  [1056, 36, <Database />],
  [1100, 36, <DocExport />],
  [1140, 5, <Down />],
  [1155, 32, <ListIcon />],
  [1198, 100, <BarText>Summary</BarText>],
  [1308, 5, <Down />],
];

const columnItems: Item[] = [
  [106, 3, <HGrip />],
  [116, 36, <Gear fill="url(#blue)" />],
  [164, 3, <HGrip />],
  [174, 36, <Stamp />],
  [219, 1, <HRule />],
  [226, 38, <Cloud />],
  [273, 38, <CloudPlus />],
  [319, 38, <Callout />],
  [366, 1, <HRule />],
  [373, 38, <LineIcon />],
  [420, 38, <Polyline />],
  [467, 38, <Dimension />],
  [513, 1, <HRule />],
  [520, 38, <Ellipse />],
  [567, 38, <Shape d="M2 7L33 3L36 30L6 35Z" />],
  [614, 38, <Shape d="M8 2L31 4L24 18L37 27L34 36L2 31Z" />],
  [660, 1, <HRule />],
  [671, 30, <LetterA />],
  [715, 38, <Typewriter />],
  [763, 3, <HGrip />],
  [772, 38, <Ruler fill={LIGHT} tick={MID} />],
  [819, 38, <Caliper />],
  [865, 1, <HRule />],
  [872, 38, <Length />],
  [919, 38, <Shape d={POLY}><Label x={8} y={24} s={18} r={10} t="ft²" /></Shape>],
  [966, 38, <Shape d={POLY} />],
  [
    1013,
    38,
    <Ic w={38} h={38}>
      <circle cx="19" cy="19" r="18" fill={LIGHT} stroke={MID} strokeWidth="2" />
      <path d="M6.500 31.500L31.500 6.500" stroke={MID} strokeWidth="2" />
      <Label x={12} y={21} s={14} r={-45} t="20" />
    </Ic>,
  ],
  [
    1060,
    38,
    <Ic w={38} h={38}>
      <path d="M27 4L4 33H36" stroke={MID} strokeWidth="3.200" />
      <Label x={18} y={28} s={14} t="32°" />
    </Ic>,
  ],
  [
    1107,
    38,
    <Shape d="M2 36L25 3Q36 18 36 36Z">
      <Label x={16} y={30} s={16} t="3’" />
    </Shape>,
  ],
];

const withLeads = (start: number, items: Item[]) => {
  let edge = start;
  return items.map(([at, size, node, drop], i) => {
    const lead = at - edge;
    edge = at + size;
    return { key: i, lead, size, node, drop };
  });
};

const menus: [string, number][] = [
  ['File', 88],
  ['Edit', 92],
  ['View', 103],
  ['Document', 164],
  ['Form', 107],
  ['Markup', 134],
  ['Measure', 144],
  ['Window', 139],
  ['Help', 60],
];

const files = [
  'P101_COMMON ...',
  'A 201_CONSTR...',
  'Drawing_Index.pdf',
  '100% CDs.pdf',
  '1. Bluebeam Stu...',
  '1. Bluebeam Stu...',
  '1. Bluebeam Stu...',
  '5 - PDF Region t...',
  'Updated Drawing...',
  'Original Drawing....',
  '01_Architectural....',
  'Example One Pa...',
  'Overlay.pdf',
  '2 - Example Site ...',
  '01_Architectural....',
  'Drawing_Index.pdf',
  '08_Plumbing.pdf',
  'Drawing_Index.pdf',
  '07_Electrical.pdf',
  '01_General.pdf',
];

const BatchLink = () => (
  <Dialog>
    <DialogTitle>
      Batch Link
      <Ic w={20} h={20}>
        <path d="M0.500 0.500L19.500 19.500M19.500 0.500L0.500 19.500" stroke="#000" strokeWidth="1.800" />
      </Ic>
    </DialogTitle>
    <DialogBody>
      <Group $h={249}>
        <Legend $line={27}>Generate Search Terms</Legend>
        <Intro>
          Batch Link searches for the terms below and links them to the corresponding destination.
          <br />
          This list can be generated automatically using Filename, Page Region, or Page Label.
          <br />
          Refine your search criteria via Settings. Click Generate to build your list.
        </Intro>
        <OptionsRow>
          <Radios>
            {['Filename', 'Page Region', 'Page Label'].map((t) => (
              <RadioRow key={t}>
                <RadioDot $on={t === 'Page Label'} />
                <span>{t}</span>
              </RadioRow>
            ))}
          </Radios>
          <SelectWrap>
            <Btn $w={110}>Select</Btn>
          </SelectWrap>
          <ScanGroup $h={107} $mt={15}>
            <Legend $line={27}>Scan Preview</Legend>
            <ScanGrid>
              <span>Scan Result:</span>
              <FirstValue>"Index01"</FirstValue>
              <span>Search Term:</span>
              <b>"Index01"</b>
            </ScanGrid>
          </ScanGroup>
          <Stack>
            <Btn $w={139}>Settings</Btn>
            <Btn $w={139}>Generate</Btn>
          </Stack>
        </OptionsRow>
      </Group>
      <Group $h={596} $mt={11}>
        <Legend>Manage Links</Legend>
        <Table>
          <TableHead>
            <CheckCell>
              <Ic w={26} h={26}>
                <rect x="1" y="1" width="24" height="24" fill="#fff" stroke="#333" strokeWidth="2" />
                <path d="M5 13L10.500 18.500L22 7" stroke="#333" strokeWidth="1.600" />
              </Ic>
            </CheckCell>
            <HeadCell>Search Terms</HeadCell>
            <HeadCell>Destination</HeadCell>
          </TableHead>
        </Table>
        <ButtonRow $pad="9px 9px 0">
          <Lower>
            <Btn $w={110}>Import...</Btn>
            <Push $w={11} />
            <Btn $w={110}>Export...</Btn>
          </Lower>
          <Push />
          <Btn $w={158}>Link Options</Btn>
        </ButtonRow>
      </Group>
      <ButtonRow $pad="10px 2px 0 1px">
        <Btn $w={110}>Back</Btn>
        <Push $w={12} />
        <Btn $w={156}>Save Config</Btn>
        <Push />
        <Btn $w={110} $off>Run</Btn>
        <Push $w={11} />
        <Btn $w={110}>Cancel</Btn>
      </ButtonRow>
    </DialogBody>
  </Dialog>
);

export default function App() {
  return (
    <>
      <Global />
      <Defs />
      <Frame>
        <TitleBar>
          <Logo>
            <Ic w={48} h={32}>
              <g transform="translate(5 0) skewX(-10)">
                <text x="0" y="29" fontFamily="Lato" fontStyle="italic" fontWeight="400" fontSize="35" textLength="20" lengthAdjust="spacingAndGlyphs" fill="#fff">R</text>
              </g>
              <text x="18" y="28" fontFamily="Lato" fontStyle="italic" fontWeight="bold" fontSize="19" textLength="29" fill="#fff">evu</text>
            </Ic>
          </Logo>
          {menus.map(([t, w]) => (
            <MenuItem key={t} $w={w}>{t}</MenuItem>
          ))}
          <WindowControls>
            <Slot $lead={0} $w={19} $drop={3}>
              <Ic w={19} h={10}><path d="M0 0H19L9.500 10Z" fill="#757373" /></Ic>
            </Slot>
            <Slot $lead={18} $w={25} $drop={8}>
              <Ic w={25} h={9}><path d="M0 0H25V9H0Z" fill="#757373" /></Ic>
            </Slot>
            <Slot $lead={23} $w={25}>
              <Ic w={25} h={17}><path d="M0 0H25V17H0ZM6 6V11H19V6Z" fill="#757373" fillRule="evenodd" /></Ic>
            </Slot>
            <Slot $lead={25} $w={21}>
              <XMark c="#757373" w={21} h={17} />
            </Slot>
          </WindowControls>
        </TitleBar>

        <TopBar $h={63}>
          {withLeads(0, topItems).map((s) => (
            <Slot key={s.key} $lead={s.lead} $w={s.size} $drop={s.drop}>{s.node}</Slot>
          ))}
        </TopBar>

        <Body>
          <Work>
            <Upper>
              <LeftPanel>
                <Tabs>
                  <TabGap $w={8} />
                  <Tab $active $w={52}><Swirl /></Tab>
                  <Tab $w={52}><Thumbs /></Tab>
                  <Tab $w={52}><Ribbon /></Tab>
                  <Tab $w={52}><Chest /></Tab>
                  <Tab $w={52}><Pin /></Tab>
                  <Tab $w={52}><Layers /></Tab>
                  <TabGap />
                </Tabs>
                <SourceBar>
                  <SourcePressed><DocB /></SourcePressed>
                  <Slot $lead={6} $w={32}><HardDisk /></Slot>
                  <Slot $lead={14} $w={28}><Antenna /></Slot>
                  <Slot $lead={11} $w={1}><Rule /></Slot>
                  <Slot $lead={7} $w={35}><DocOpen /></Slot>
                </SourceBar>
                <SectionHead>
                  <Down w={15} fill="#fff" />
                  <span>Recents</span>
                  <Calendar />
                </SectionHead>
                {files.map((f, i) => (
                  <FileRow key={i}><PdfIcon /><span>{f}</span></FileRow>
                ))}
              </LeftPanel>
              <VSplit>
                <Handle $side="left">
                  <Ic w={9} h={14}><path d="M9 0L0 7L9 14L7.500 7Z" fill="#fff" /></Ic>
                </Handle>
              </VSplit>
              <Canvas>
                <StatusStrip>
                  <Person />
                  <Down w={5} fill="#fff" />
                </StatusStrip>
              </Canvas>
            </Upper>
            <HSplit>
              <Ic w={4} h={8}><path d="M0 0L4 4L0 8Z" fill="#fff" /></Ic>
              <Ic w={4} h={8}><path d="M0 0L4 4L0 8Z" fill="#fff" /></Ic>
              <Handle $side="bottom">
                <Ic w={15} h={10}><path d="M0 0L7.500 2L15 0L7.500 10Z" fill="#fff" /></Ic>
              </Handle>
            </HSplit>
            <Bottom>
              <SideTabs>
                <SideTab $edge="bottom" />
                <SideTab><RedPen /></SideTab>
                <SideTab $edge="top" />
              </SideTabs>
              <BottomMain>
                <Bar $h={47}>
                  {withLeads(54, bottomItems).map((s) => (
                    <Slot key={s.key} $lead={s.lead} $w={s.size} $drop={s.drop}>{s.node}</Slot>
                  ))}
                </Bar>
                <HeaderLine>
                  <ColumnHead>
                    Page Label
                    <Ic w={8} h={8}><path d="M4 0.500L7.500 7.500H0.500Z" stroke="#fff" fill="none" /></Ic>
                  </ColumnHead>
                  <Spinner>
                    <Ic w={8} h={5}><path d="M0.500 4.500L4 1L7.500 4.500" stroke="#bbb" strokeWidth="2" /></Ic>
                    <Ic w={8} h={5}><path d="M0.500 0.500L4 4L7.500 0.500" stroke="#bbb" strokeWidth="2" /></Ic>
                  </Spinner>
                </HeaderLine>
              </BottomMain>
            </Bottom>
          </Work>

          <VSplit>
            <Handle $side="right">
              <Ic w={9} h={14}><path d="M0 0L9 7L0 14L1.500 7Z" fill="#fff" /></Ic>
            </Handle>
          </VSplit>

          <RightPanel>
            <Tabs>
              <TabGap $w={10} />
              <Tab $active $w={52}><Gear fill="url(#blue)" /></Tab>
              <Tab $w={52}><Binoculars /></Tab>
              <Tab $w={52}><Ruler /></Tab>
              <Tab $w={52}><House /></Tab>
              <TabGap />
            </Tabs>
          </RightPanel>

          <ToolColumn>
            {withLeads(107, columnItems).map((s) => (
              <ToolSlot key={s.key} $lead={s.lead} $h={s.size}>{s.node}</ToolSlot>
            ))}
            <ColumnEnd>
              <Ic w={7} h={7}><path d="M0 0H1.500V7H0ZM3 0L7 3.500L3 7Z" fill="#fff" /></Ic>
            </ColumnEnd>
          </ToolColumn>
        </Body>

        <BatchLink />
        <Pointer>
          <Ic w={26} h={40}>
            <path d="M0.500 0.500V33L8 26L12.500 37.500L16.500 36L12 24.500H24Z" fill="#fff" stroke="#000" />
          </Ic>
        </Pointer>
      </Frame>
    </>
  );
}
